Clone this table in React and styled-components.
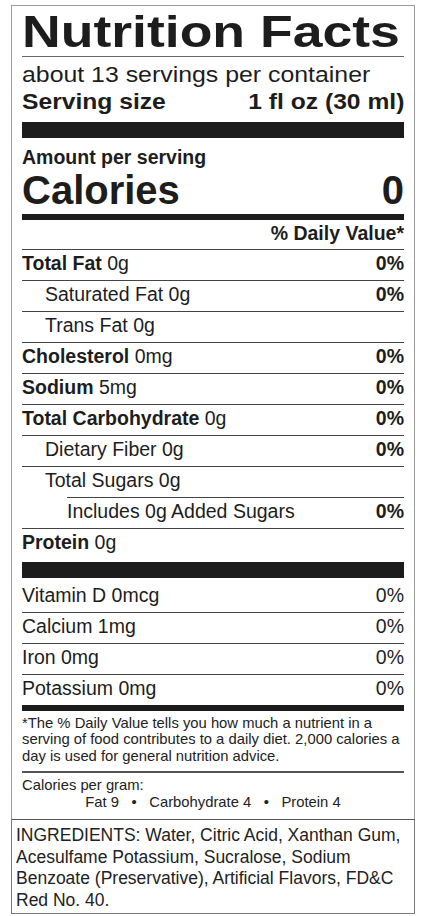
import React from "react";
import styled, { createGlobalStyle } from "styled-components";

const GlobalStyle = createGlobalStyle`
  body {
    margin: 0;
    background: #fff;
    color: #1d1d1d;
    font-family: "Liberation Sans", Arial, sans-serif;
  }
`;

const StyledPage = styled.main`
  padding: 5px 11px 0;
`;

const StyledLabel = styled.section`
  border: 1px solid #9a9a9a;
  border-bottom-color: #555;
  padding: 0 10px;
`;

const Stretch = styled.span`
  display: inline-block;
  white-space: nowrap;
  transform: scaleX(${({ $x }) => $x});
  transform-origin: ${({ $origin }) => $origin || "left"} center;
`;

const StyledTitle = styled.h1`
  margin: 0;
  padding: 3px 0 2px;
  font-size: 45px;
  line-height: 45px;
  font-weight: 700;
  border-bottom: 1px solid #666;
`;

const StyledServings = styled.div`
  padding-top: 4px;
  font-size: 22px;
  line-height: 27px;
`;

const StyledServingSize = styled.div`
  display: flex;
  justify-content: space-between;
  font-size: 22px;
  line-height: 27px;
  font-weight: 700;
`;

const Bar = styled.div`
  height: ${({ $h }) => $h}px;
  margin-top: ${({ $mt }) => $mt || 0}px;
  background: #1c1c1c;
`;

const StyledAmount = styled.div`
  margin-top: 8px;
  font-size: 19.5px;
  line-height: 22px;
  font-weight: 700;
`;

const StyledCalories = styled.div`
  display: flex;
  justify-content: space-between;
  margin-top: 2px;
  font-size: 40px;
  line-height: 40px;
  font-weight: 700;
`;

const StyledDVHeader = styled.div`
  padding: 2px 0 5px;
  text-align: right;
  font-size: 19.5px;
  line-height: 22px;
  font-weight: 700;
`;

const Row = styled.div`
  display: flex;
  justify-content: space-between;
  margin-left: ${({ $inset }) => $inset || 0}px;
  padding: ${({ $top }) => $top || 0}px 0 3px ${({ $indent }) => $indent || 0}px;
  border-top: ${({ $line }) => ($line ? "1px solid #444" : "none")};
  font-size: 19.5px;
  line-height: 27px;
`;

const Name = styled.span`
  font-weight: 700;
`;

const Pct = styled.span`
  font-weight: ${({ $bold }) => ($bold ? 700 : 400)};
`;

const StyledFootnote = styled.p`
  margin: 0;
  padding: 3.5px 0 7px;
  border-bottom: 2px solid #555;
  font-size: 14.8px;
  line-height: 16.5px;
  color: #222;
`;

const StyledPerGram = styled.div`
  padding: 4px 0 8px;
  font-size: 14.8px;
  line-height: 17px;
  color: #222;
  .values {
    display: flex;
    justify-content: center;
    gap: 12.5px;
  }
`;

const StyledIngredients = styled.p`
  margin: 0;
  border: 1px solid #777;
  border-top: none;
  padding: 5px 6px 2px 4px;
  font-size: 17.5px;
  line-height: 21.5px;
  color: #222;
`;

const nutrients = [
  { name: "Total Fat", amount: "0g", pct: "0%" },
  { label: "Saturated Fat 0g", pct: "0%", indent: 23 },
  { label: "Trans Fat 0g", indent: 23 },
  { name: "Cholesterol", amount: "0mg", pct: "0%" },
  { name: "Sodium", amount: "5mg", pct: "0%" },
  { name: "Total Carbohydrate", amount: "0g", pct: "0%" },
  { label: "Dietary Fiber 0g", pct: "0%", indent: 23 },
  { label: "Total Sugars 0g", indent: 23 },
  { label: "Includes 0g Added Sugars", pct: "0%", inset: 45 },
  { name: "Protein", amount: "0g" },
];

const vitamins = [
  ["Vitamin D 0mcg", "0%"],
  ["Calcium 1mg", "0%"],
  ["Iron 0mg", "0%"],
  ["Potassium 0mg", "0%"],
];

const App = () => {
  return (
    <StyledPage>
      <GlobalStyle />
      <StyledLabel>
        <StyledTitle>
          <Stretch $x={1.19}>Nutrition Facts</Stretch>
        </StyledTitle>
        <StyledServings>
          <Stretch $x={1.13}>about 13 servings per container</Stretch>
        </StyledServings>
        <StyledServingSize>
          <Stretch $x={1.12}>Serving size</Stretch>
          <Stretch $x={1.12} $origin="right">
            1 fl oz (30 ml)
          </Stretch>
        </StyledServingSize>
        <Bar $h={16} $mt={7} />
        <StyledAmount>Amount per serving</StyledAmount>
        <StyledCalories>
          <span>Calories</span>
          <span>0</span>
        </StyledCalories>
        <Bar $h={6} $mt={4} />
        <StyledDVHeader>% Daily Value*</StyledDVHeader>
        {nutrients.map((n, i) => (
          <Row key={i} $line $indent={n.indent} $inset={n.inset}>
            <span>
              {n.name ? (
                <>
                  <Name>{n.name}</Name> {n.amount}
                </>
              ) : (
                n.label
              )}
            </span>
            {n.pct && <Pct $bold>{n.pct}</Pct>}
          </Row>
        ))}
        <Bar $h={16} $mt={3} />
        {vitamins.map(([label, pct], i) => (
          <Row key={label} $line={i > 0} $top={i === 0 ? 4 : 0}>
            <span>{label}</span>
            <Pct>{pct}</Pct>
          </Row>
        ))}
        <Bar $h={6} />
        <StyledFootnote>
          *The % Daily Value tells you how much a nutrient in a serving of
          food contributes to a daily diet. 2,000 calories a day is used for
          general nutrition advice.
        </StyledFootnote>
        <StyledPerGram>
          <div>Calories per gram:</div>
          <div className="values">
            <span>Fat 9</span>
            <span>•</span>
            <span>Carbohydrate 4</span>
            <span>•</span>
            <span>Protein 4</span>
          </div>
        </StyledPerGram>
      </StyledLabel>
      <StyledIngredients>
        INGREDIENTS: Water, Citric Acid, Xanthan Gum, Acesulfame Potassium,
        Sucralose, Sodium Benzoate (Preservative), Artificial Flavors, FD&amp;C
        Red No. 40.
      </StyledIngredients>
    </StyledPage>
  );
};

export default App;
